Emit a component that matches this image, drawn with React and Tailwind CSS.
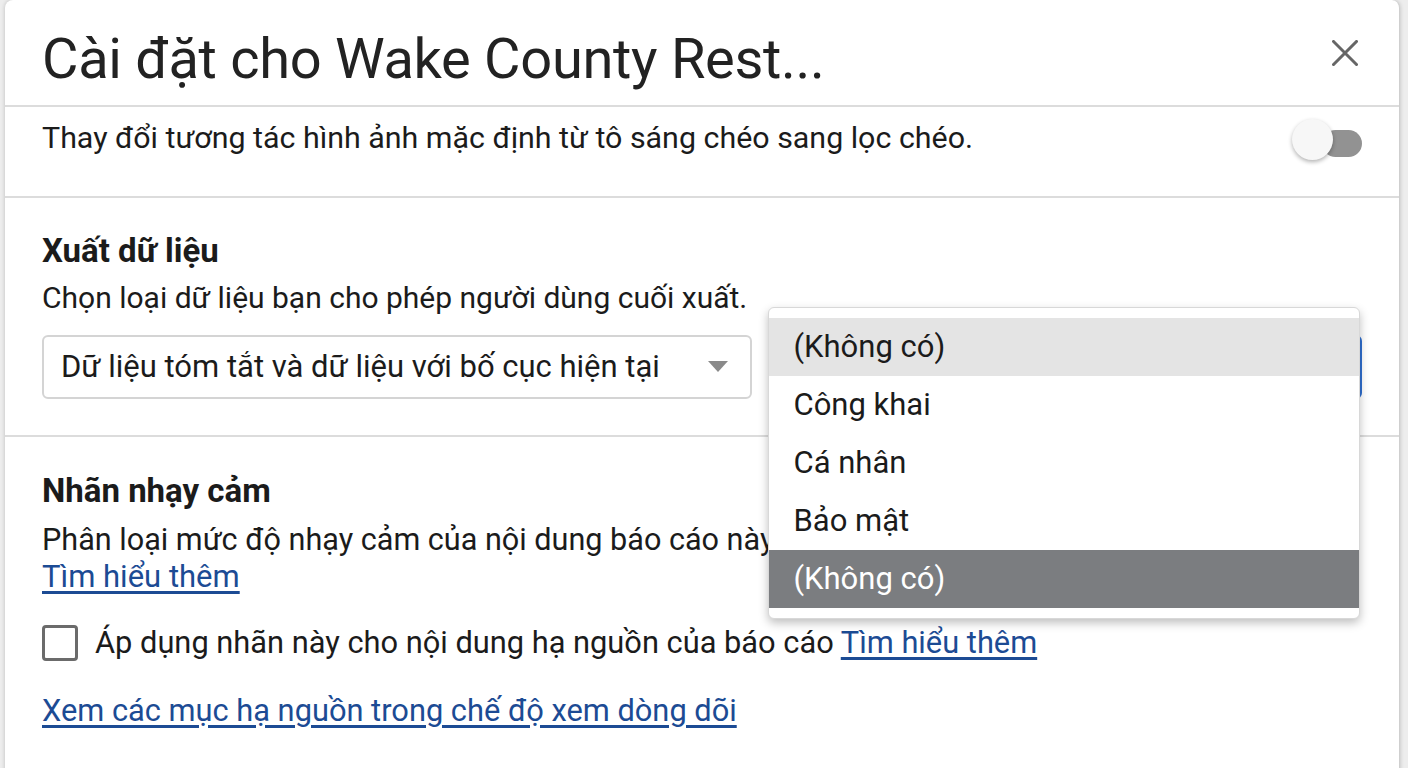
import React from 'react';

const font = { fontFamily: 'Roboto, "Noto Sans", "Liberation Sans", sans-serif' };

const options = ['(Không có)', 'Công khai', 'Cá nhân', 'Bảo mật', '(Không có)'];

function Dropdown() {
    return (
        <div className="absolute left-[-3px] top-[-30px] w-[592px] bg-white rounded-md border border-[#d8d8d8] shadow-[0_4px_10px_rgba(0,0,0,0.25)] py-[10px] z-10">
            {options.map((opt, i) => {
                // first item hovered, last one selected
                let cls = 'text-[#1b1b1b]';
                if (i === 0) cls = 'bg-[#e4e4e4] text-[#1b1b1b]';
                if (i === options.length - 1) cls = 'bg-[#7b7d80] text-white';
                return (
                    <div key={i} className={`h-[58px] flex items-center px-[24px] text-[31px] ${cls}`}>
                        {opt}
                    </div>
                );
            })}
        </div>
    );
}

export default function App() {
    return (
        <div className="w-[1408px] h-[768px] overflow-hidden bg-[#ededed]" style={font}>
            <div className="ml-[5px] w-[1395px] h-[790px] bg-white rounded-t-lg border-r border-[#cfcfcf] shadow-[0_0_4px_rgba(0,0,0,0.2)]">
                {/* header */}
                <div className="h-[107px] flex items-start justify-between pl-[37px] pr-[41px] pt-[31px] border-b-2 border-[#dcdcdc]">
                    <h1 className="text-[56px] leading-none text-[#222] tracking-[-0.3px]">Cài đặt cho Wake County Rest...</h1>
                    <svg width="26" height="26" viewBox="0 0 26 26" className="mt-[9px]">
                        <path d="M1.5 1.5 L24.5 24.5 M24.5 1.5 L1.5 24.5" stroke="#666" strokeWidth="3" strokeLinecap="square" />
                    </svg>
                </div>

                {/* cross filter toggle */}
                <div className="h-[91px] flex items-start justify-between pl-[37px] pr-[37px] pt-[13px] border-b-2 border-[#dcdcdc]">
                    <p className="text-[30.4px] leading-[36px] text-[#1b1b1b]">Thay đổi tương tác hình ảnh mặc định từ tô sáng chéo sang lọc chéo.</p>
                    <div className="relative w-[72px] h-[42px] mt-[-1px]">
                        <div className="absolute right-0 top-[11px] w-[40px] h-[27px] rounded-full bg-[#929292]"></div>
                        <div className="absolute left-[2px] top-0 w-[41px] h-[41px] rounded-full bg-[#f7f7f7] shadow-[0_2px_4px_rgba(0,0,0,0.3)]"></div>
                    </div>
                </div>

                {/* export data */}
                <div className="pl-[37px] pr-[37px] pt-[33px] pb-[36px] border-b-2 border-[#dcdcdc]">
                    <h2 className="text-[33px] leading-[40px] font-bold text-[#1b1b1b]">Xuất dữ liệu</h2>
                    <p className="text-[30px] leading-[40px] mt-[7px] text-[#1b1b1b]">Chọn loại dữ liệu bạn cho phép người dùng cuối xuất.</p>
                    <div className="flex gap-[17px] mt-[17px]">
                        <div className="w-[711px] h-[64px] border-2 border-[#d4d4d4] rounded-md flex items-center justify-between pl-[17px] pr-[22px]">
                            <span className="text-[31px] text-[#1b1b1b]">Dữ liệu tóm tắt và dữ liệu với bố cục hiện tại</span>
                            <svg width="20" height="12" viewBox="0 0 20 12">
                                <path d="M0 0 L20 0 L10 11 Z" fill="#8a8a8a" />
                            </svg>
                        </div>
                        <div className="relative w-[593px] h-[64px] border-2 border-[#2f6fd0] rounded-md">
                            <Dropdown />
                        </div>
                    </div>
                </div>

                {/* sensitivity label */}
                <div className="pl-[37px] pr-[37px] pt-[34px]">
                    <h2 className="text-[33px] leading-[40px] font-bold text-[#1b1b1b]">Nhãn nhạy cảm</h2>
                    <p className="text-[30.6px] leading-[37px] mt-[10px] text-[#1b1b1b]">Phân loại mức độ nhạy cảm của nội dung báo cáo này.</p>
                    <a className="text-[31px] leading-[37px] text-[#1c4b94] underline underline-offset-4 block w-fit">Tìm hiểu thêm</a>
                    <div className="flex items-center gap-[17px] mt-[29px]">
                        <div className="w-[36px] h-[36px] border-[3px] border-[#6b6b6b] rounded-[4px]"></div>
                        <span className="text-[30.8px] leading-[37px] text-[#1b1b1b]">
                            Áp dụng nhãn này cho nội dung hạ nguồn của báo cáo{' '}
                            <a className="text-[#1c4b94] underline underline-offset-4">Tìm hiểu thêm</a>
                        </span>
                    </div>
                    <a className="block w-fit mt-[31px] text-[30.8px] leading-[37px] text-[#1c4b94] underline underline-offset-4">Xem các mục hạ nguồn trong chế độ xem dòng dõi</a>
                </div>
            </div>
        </div>
    );
}
